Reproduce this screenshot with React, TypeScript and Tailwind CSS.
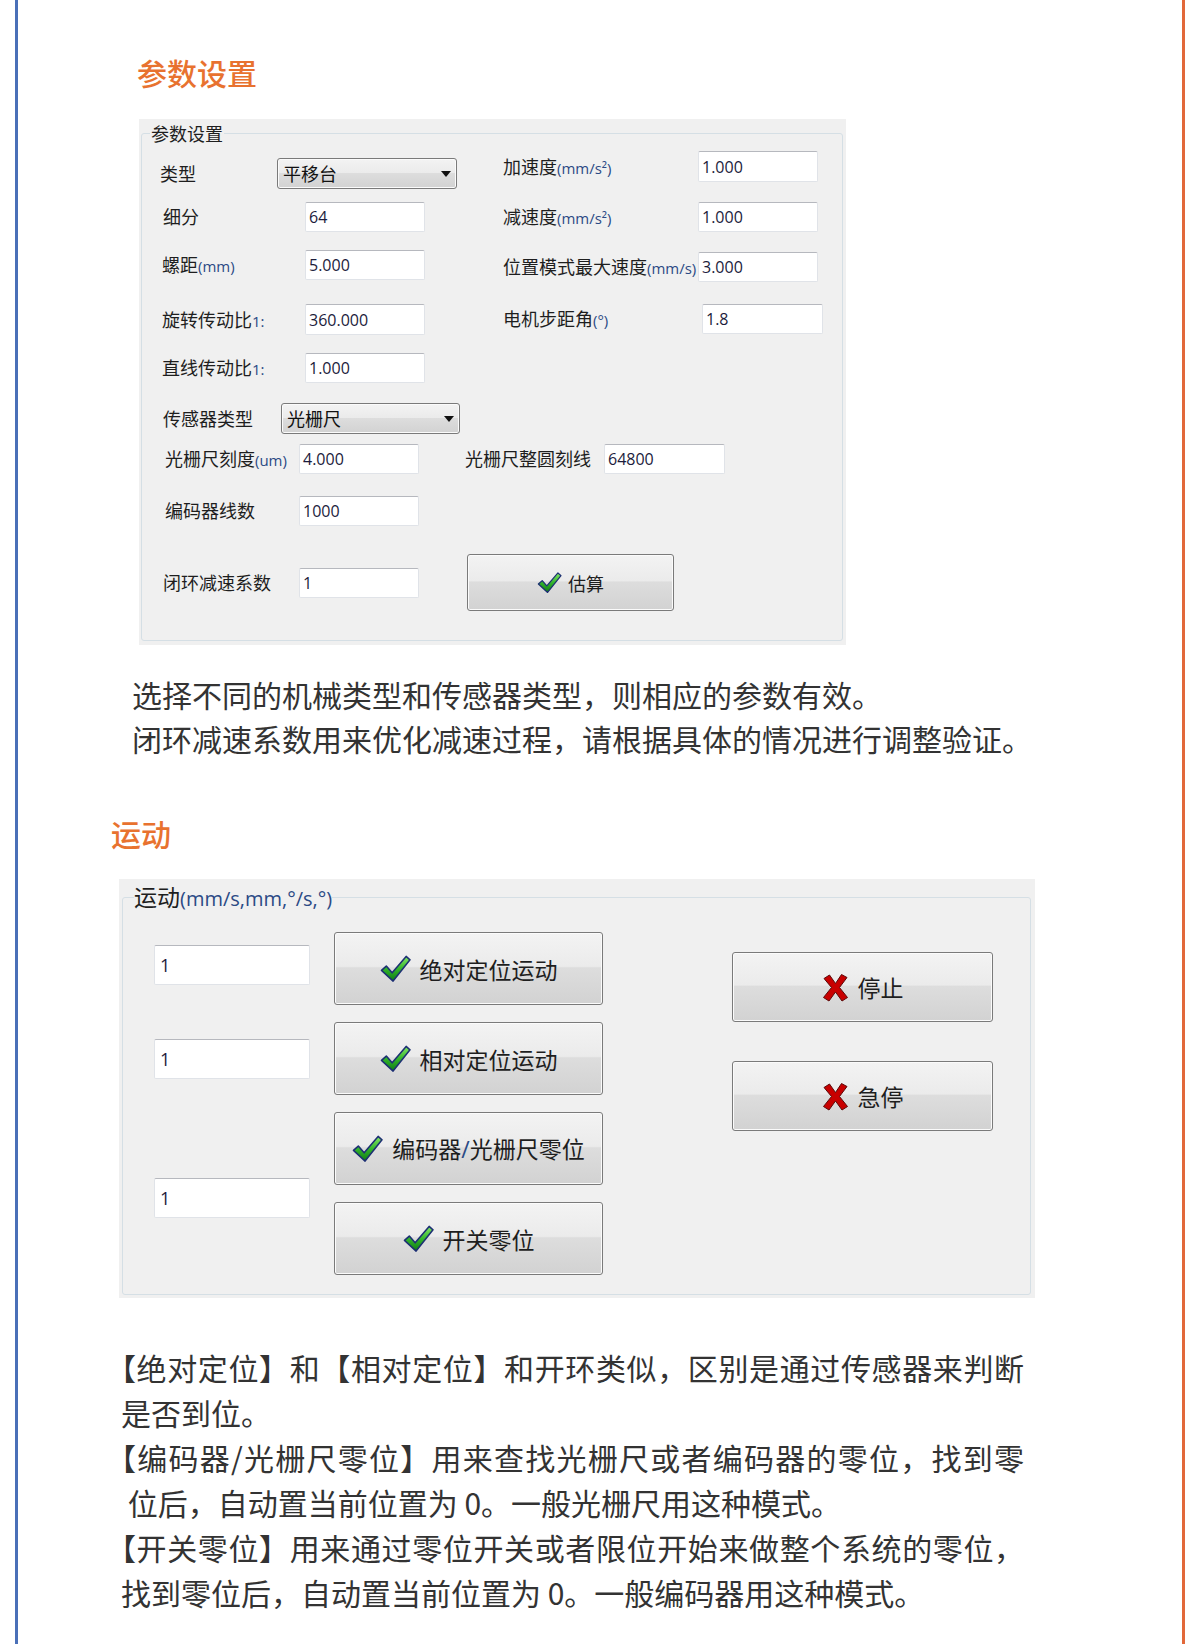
import React from "react";

const cjk = "font-['Noto_Sans_CJK_SC',sans-serif]";
const num = "font-['Open_Sans','Noto_Sans_CJK_SC',sans-serif]";
const btnCls =
  "flex items-center justify-center rounded-[3px] border border-[#7a7a7a] bg-[linear-gradient(to_bottom,#f3f3f3_0%,#ebebeb_47%,#dddddd_49%,#d2d2d2_100%)] shadow-[inset_0_0_0_1px_#fbfbfb]";

function Check({ w = 31, h = 29 }: { w?: number; h?: number }) {
  return (
    <svg width={w} height={h} viewBox="0 0 32 30" className="shrink-0">
      <defs>
        <linearGradient id="chk" x1="0" y1="0" x2="0" y2="1">
          <stop offset="0" stopColor="#86e866" />
          <stop offset="0.5" stopColor="#33b52c" />
          <stop offset="1" stopColor="#0f7c14" />
        </linearGradient>
      </defs>
      <path
        d="M1.5 17 L6.5 12.5 L12.5 19.5 L27 2.5 L31 6 L13.5 28 Z"
        fill="url(#chk)"
        stroke="#1c2f73"
        strokeWidth="1.6"
        strokeLinejoin="round"
      />
    </svg>
  );
}

function Cross() {
  return (
    <svg width="27" height="29" viewBox="0 0 27 29" className="shrink-0">
      <path
        d="M2 5.5 L7.5 2 L13.5 10.5 L19.5 1.5 L25 4.5 L17.5 14.5 L25.5 24.5 L20 28 L13.5 19 L7 28 L1.5 24.5 L9.5 14.5 Z"
        fill="#c80000"
        stroke="#5c0a0a"
        strokeWidth="1"
        strokeLinejoin="round"
      />
    </svg>
  );
}

function L({ t, u }: { t: string; u?: string }) {
  return (
    <span className={`whitespace-nowrap text-[18px] leading-[22px] text-[#1e1e1e] ${cjk}`}>
      {t}
      {u && <span className={`text-[15px] text-[#2b4a85] ${num}`}>{u}</span>}
    </span>
  );
}

function Inp({ v, cls = "w-[120px] h-[30px]" }: { v: string; cls?: string }) {
  return (
    <div
      className={`${cls} flex items-center rounded-[2px] border border-[#e0e3e8] border-t-[#b6b8be] bg-white pl-[3px] text-[16px] text-[#1c1c3c] ${num}`}
    >
      {v}
    </div>
  );
}

function Combo({ v, cls }: { v: string; cls: string }) {
  return (
    <div className={`${cls} h-[31px] ${btnCls} !justify-between px-[5px]`}>
      <span className={`text-[18px] text-[#111] ${cjk}`}>{v}</span>
      <svg width="10" height="6" viewBox="0 0 10 6">
        <path d="M0 0 H10 L5 6 Z" fill="#111" />
      </svg>
    </div>
  );
}

function Inp2({ cls }: { cls: string }) {
  return (
    <div
      className={`${cls} flex h-[40px] w-[156px] items-center rounded-[2px] border border-[#e0e3e8] border-t-[#b6b8be] bg-white pl-[5px] text-[18px] text-[#1c1c3c] ${num}`}
    >
      1
    </div>
  );
}

function BigBtn({ t, cls, cross }: { t: React.ReactNode; cls: string; cross?: boolean }) {
  return (
    <div className={`${cls} ${btnCls} gap-[9px]`}>
      {cross ? <Cross /> : <Check />}
      <span className={`text-[23px] leading-[28px] text-[#1e1e1e] ${cjk}`}>{t}</span>
    </div>
  );
}

const full = "w-[903px] text-justify [text-align-last:justify] [text-spacing-trim:trim-start]";
const last = "whitespace-pre [text-spacing-trim:trim-start]";

export default function App() {
  return (
    <div className={`h-[1644px] w-[1200px] overflow-hidden bg-white ${cjk}`}>
      <div className="ml-[15px] flex h-[1644px] w-[1170px] flex-col border-x-[3px] border-l-[#4a70b8] border-r-[#e2683a]">
        <div className="ml-[119px] mt-[52px] text-[30px] font-medium leading-[40px] text-[#e8722f]">参数设置</div>

        {/* Panel 1 */}
        <div className="ml-[121px] mt-[27px] h-[526px] w-[707px] bg-[#f0f0f0] pl-[2px] pt-[4px]">
          <fieldset className="h-[518px] w-[702px] rounded-[3px] border border-[#d5dfe5]">
            <legend className="ml-[8px] px-[1px] text-[18px] leading-[20px] text-[#1e1e1e]">参数设置</legend>
            <div className="flex flex-col">
              {/* A */}
              <div className="mt-[8px] flex items-start">
                <div className="mt-[7px] flex w-[361px] items-center">
                  <div className="w-[135px] pl-[18px]"><L t="类型" /></div>
                  <Combo v="平移台" cls="w-[180px]" />
                </div>
                <div className="flex items-center">
                  <div className="w-[195px]"><L t="加速度" u="(mm/s²)" /></div>
                  <Inp v="1.000" cls="w-[120px] h-[31px]" />
                </div>
              </div>
              {/* B */}
              <div className="mt-[13px] flex items-start">
                <div className="flex w-[361px] items-center">
                  <div className="w-[163px] pl-[21px]"><L t="细分" /></div>
                  <Inp v="64" />
                </div>
                <div className="flex items-center">
                  <div className="w-[195px]"><L t="减速度" u="(mm/s²)" /></div>
                  <Inp v="1.000" />
                </div>
              </div>
              {/* C */}
              <div className="mt-[18px] flex items-start">
                <div className="flex w-[361px] items-center">
                  <div className="w-[163px] pl-[20px]"><L t="螺距" u="(mm)" /></div>
                  <Inp v="5.000" />
                </div>
                <div className="mt-[2px] flex items-center">
                  <div className="w-[195px]"><L t="位置模式最大速度" u="(mm/s)" /></div>
                  <Inp v="3.000" />
                </div>
              </div>
              {/* D */}
              <div className="mt-[22px] flex items-start">
                <div className="flex w-[361px] items-center">
                  <div className="w-[163px] pl-[20px]"><L t="旋转传动比" u="1:" /></div>
                  <Inp v="360.000" cls="w-[120px] h-[31px]" />
                </div>
                <div className="flex items-center">
                  <div className="w-[199px]"><L t="电机步距角" u="(°)" /></div>
                  <Inp v="1.8" cls="w-[121px] h-[30px]" />
                </div>
              </div>
              {/* E */}
              <div className="mt-[18px] flex items-center">
                <div className="w-[163px] pl-[20px]"><L t="直线传动比" u="1:" /></div>
                <Inp v="1.000" />
              </div>
              {/* F */}
              <div className="mt-[20px] flex items-center">
                <div className="w-[139px] pl-[21px]"><L t="传感器类型" /></div>
                <Combo v="光栅尺" cls="w-[179px]" />
              </div>
              {/* G */}
              <div className="mt-[10px] flex items-start">
                <div className="flex w-[323px] items-center">
                  <div className="w-[157px] pl-[23px]"><L t="光栅尺刻度" u="(um)" /></div>
                  <Inp v="4.000" />
                </div>
                <div className="flex items-center">
                  <div className="w-[139px]"><L t="光栅尺整圆刻线" /></div>
                  <Inp v="64800" cls="w-[121px] h-[30px]" />
                </div>
              </div>
              {/* H */}
              <div className="mt-[22px] flex items-center">
                <div className="w-[157px] pl-[23px]"><L t="编码器线数" /></div>
                <Inp v="1000" />
              </div>
              {/* I */}
              <div className="mt-[28px] flex items-start">
                <div className="mt-[14px] flex w-[325px] items-center">
                  <div className="w-[157px] pl-[21px]"><L t="闭环减速系数" /></div>
                  <Inp v="1" />
                </div>
                <div className={`h-[57px] w-[207px] ${btnCls} gap-[6px]`}>
                  <Check w={25} h={23} />
                  <span className="text-[18px] leading-[22px] text-[#1e1e1e]">估算</span>
                </div>
              </div>
            </div>
          </fieldset>
        </div>

        <div className="ml-[114px] mt-[27px] text-[30px] leading-[44px] text-[#333333]">
          <div className="whitespace-pre">选择不同的机械类型和传感器类型，则相应的参数有效。</div>
          <div className="whitespace-pre">闭环减速系数用来优化减速过程，请根据具体的情况进行调整验证。</div>
        </div>

        <div className="ml-[93px] mt-[53px] text-[30px] font-medium leading-[40px] text-[#e8722f]">运动</div>

        {/* Panel 2 */}
        <div className="ml-[101px] mt-[26px] h-[419px] w-[916px] bg-[#f0f0f0] pl-[3px] pt-[4px]">
          <fieldset className="h-[412px] w-[909px] rounded-[3px] border border-[#d5dfe5]">
            <legend className="ml-[11px] text-[23px] leading-[26px] text-[#1e1e1e]">
              运动<span className={`text-[20px] text-[#2b4a85] ${num}`}>(mm/s,mm,°/s,°)</span>
            </legend>
            <div className="flex pl-[31px]">
              <div className="flex w-[156px] flex-col">
                <Inp2 cls="mt-[33px]" />
                <Inp2 cls="mt-[54px]" />
                <Inp2 cls="mt-[99px]" />
              </div>
              <div className="ml-[24px] flex w-[269px] flex-col">
                <BigBtn cls="mt-[20px] h-[73px] w-[269px]" t="绝对定位运动" />
                <BigBtn cls="mt-[17px] h-[73px] w-[269px]" t="相对定位运动" />
                <BigBtn
                  cls="mt-[17px] h-[73px] w-[269px]"
                  t={
                    <>
                      编码器<span className={`text-[#2b4a85] ${num}`}>/</span>光栅尺零位
                    </>
                  }
                />
                <BigBtn cls="mt-[17px] h-[73px] w-[269px]" t="开关零位" />
              </div>
              <div className="ml-[129px] flex w-[261px] flex-col">
                <BigBtn cls="mt-[40px] h-[70px] w-[261px]" t="停止" cross />
                <BigBtn cls="mt-[39px] h-[70px] w-[261px]" t="急停" cross />
              </div>
            </div>
          </fieldset>
        </div>

        <div className="ml-[103px] mt-[47px] text-[30px] leading-[45px] text-[#333333]">
          <div className={full}>【绝对定位】和【相对定位】和开环类似，区别是通过传感器来判断</div>
          <div className={last}>是否到位。</div>
          <div className={full}>【编码器/光栅尺零位】用来查找光栅尺或者编码器的零位，找到零</div>
          <div className={last}> 位后，自动置当前位置为 0。一般光栅尺用这种模式。</div>
          <div className={full}>【开关零位】用来通过零位开关或者限位开始来做整个系统的零位，</div>
          <div className={last}>找到零位后，自动置当前位置为 0。一般编码器用这种模式。</div>
        </div>
      </div>
    </div>
  );
}
